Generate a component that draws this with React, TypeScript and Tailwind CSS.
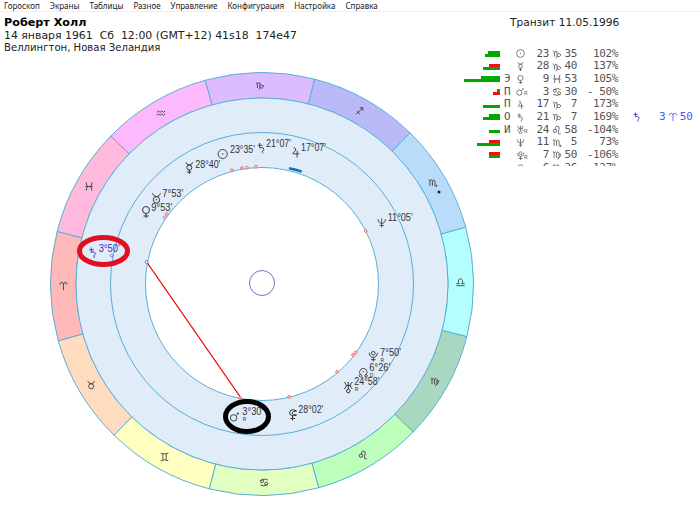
const menu = ["Гороскоп", "Экраны", "Таблицы", "Разное", "Управление", "Конфигурация", "Настройка", "Справка"];

const CX = 262;
const CY = 230;

// astro symbols in a 12x12 box
const shapes: Record<string, { d: string; c?: number[][]; dot?: number[][] }> = {
  sun: { d: "", c: [[6, 6, 5.2]], dot: [[6, 6, 0.8]] },
  mercury: { d: "M2.5 0.3Q3.5 3 6 3Q8.5 3 9.5 0.3M6 8V12M4 10H8", c: [[6, 5.5, 2.5]] },
  venus: { d: "M6 7.5V12M3.5 10H8.5", c: [[6, 4, 3.5]] },
  mars: { d: "M7 5L8.5 3.5", c: [[4.5, 7.5, 3.5]], dot: [[9.3, 2.7, 1]] },
  jupiter: { d: "M3 7Q6.5 5 6 2.5Q5 0.5 3.5 2M2.5 8H10M7.5 4.5V12" },
  saturn: { d: "M2 3H7M4 0.5V6Q6 4.5 8 6Q9.5 8 7 9.5Q6.5 11 8 11.7" },
  uranus: { d: "M2 1Q4 3 4 4.5Q4 6 2 8M10 1Q8 3 8 4.5Q8 6 10 8M4 4.5H8M6 1V8", c: [[6, 10, 1.8]] },
  neptune: { d: "M1.5 2Q2 7 6 7Q10 7 10.5 2M6 1V12M3.5 9.5H8.5" },
  pluto: { d: "M1.5 2.5Q2 7.5 6 7.5Q10 7.5 10.5 2.5M6 7.5V12M3.5 10H8.5", c: [[6, 3, 2]] },
  node: { d: "M3.5 9Q1 7.5 1.5 5Q2.5 1 6 1Q9.5 1 10.5 5Q11 7.5 8.5 9", c: [[2.7, 10, 1.5], [9.3, 10, 1.5]], dot: [[6, 5, 0.8]] },
  selena: { d: "M1.5 0.8Q3 4.5 6 4.5Q9 4.5 10.5 0.8", c: [[6, 8, 3.5]], dot: [[6, 8, 0.8]] },
  lilith: { d: "M9.5 2.5Q6 0 3.5 2Q1.5 4.5 3.5 6.5Q6.5 8 9.5 6.5Q6 6.8 5 4.5Q5.5 2.5 9.5 2.5M5.5 7V12M3.5 10H8" },
  aries: { d: "M6 11V4Q5.5 1 3 1.5Q1 2.5 2.5 4.5M6 4Q6.5 1 9 1.5Q11 2.5 9.5 4.5" },
  taurus: { d: "M2 1Q3 4.5 6 4.5Q9 4.5 10 1", c: [[6, 7.5, 3]] },
  gemini: { d: "M1.5 1.5Q6 3.5 10.5 1.5M1.5 10.5Q6 8.5 10.5 10.5M4 2.5V9.5M8 2.5V9.5" },
  cancer: { d: "M2 3.5Q6 0.5 10.5 3M10 8.5Q6 11.5 1.5 9", c: [[3.5, 4.5, 1.8], [8.5, 7.5, 1.8]] },
  leo: { d: "M5 6Q3 2 6 1.5Q9.5 1.5 8.5 5Q7 9 8 10.5Q9.5 11.5 10.5 10", c: [[3.5, 7, 2]] },
  virgo: { d: "M1 2Q2.5 2 2.5 4V9.5M2.5 3.5Q4.5 1 5.5 3.5V9.5M5.5 3.5Q7.5 1 8.5 3.5V8Q8.5 10.5 6.5 11.5M8.5 5Q11 4 10.5 6.5Q10 8.5 7 10" },
  libra: { d: "M1 10.5H11M1 8H4.5Q3 6.5 3.5 4.5Q4.5 2 6 2Q7.5 2 8.5 4.5Q9 6.5 7.5 8H11" },
  scorpio: { d: "M1 2Q2.5 2 2.5 4V9.5M2.5 3.5Q4.5 1 5.5 3.5V9.5M5.5 3.5Q7.5 1 8.5 3.5V9Q9 10.5 11 9.5L10 8M11 9.5L9.5 10.8" },
  sagittarius: { d: "M2 10L10 2M6.5 2H10V5.5M3 6L6.5 9.5" },
  capricorn: { d: "M1 2Q2.5 2.5 3 5V9M3 4.5Q4.5 1.5 6 3V8.5Q6 10.5 4.5 11M6 6.5Q8 4.5 10 6Q11 8 9 9Q7 9.5 6 8" },
  aquarius: { d: "M1 5L3 3.5L5 5L7 3.5L9 5L11 3.5M1 8.5L3 7L5 8.5L7 7L9 8.5L11 7" },
  pisces: { d: "M2.5 1Q5 6 2.5 11M9.5 1Q7 6 9.5 11M1.5 6H10.5" },
};

const Shape = ({ name, color = "#333", width = 1 }: { name: string; color?: string; width?: number }) => {
  const s = shapes[name];
  return (
    <g fill="none" stroke={color} strokeWidth={width}>
      {s.d && <path d={s.d} />}
      {s.c?.map(([x, y, r]) => <circle key={`${x}-${y}`} cx={x} cy={y} r={r} />)}
      {s.dot?.map(([x, y, r]) => <circle key={`${x}-${y}`} cx={x} cy={y} r={r} fill={color} stroke="none" />)}
    </g>
  );
};

const Placed = ({ name, x, y, size, color }: { name: string; x: number; y: number; size: number; color?: string }) => (
  <g transform={`translate(${x - size / 2} ${y - size / 2}) scale(${size / 12})`}>
    <Shape name={name} color={color} />
  </g>
);

const signs = [
  { glyph: "aries", color: "#ffb9b9", mid: 179.4 },
  { glyph: "taurus", color: "#ffdcc0", mid: 149.4 },
  { glyph: "gemini", color: "#ffffc0", mid: 119.4 },
  { glyph: "cancer", color: "#e0ffc0", mid: 89.4 },
  { glyph: "leo", color: "#bbffbb", mid: 59.4 },
  { glyph: "virgo", color: "#a9d8c0", mid: 29.4 },
  { glyph: "libra", color: "#b3ffff", mid: -0.6 },
  { glyph: "scorpio", color: "#badcfb", mid: -30.6 },
  { glyph: "sagittarius", color: "#babaf9", mid: -60.6 },
  { glyph: "capricorn", color: "#dcbcff", mid: -90.6 },
  { glyph: "aquarius", color: "#fcb9fc", mid: -120.6 },
  { glyph: "pisces", color: "#ffb9dc", mid: -150.6 },
];

// y values below are page coordinates, the svg starts at y=54
const labels = [
  { glyph: "sun", gx: 222.7, gy: 154, size: 10.5, text: "23°35'", x: 230, y: 153 },
  { glyph: "saturn", gx: 261.5, gy: 148, size: 11, text: "21°07'", x: 266, y: 147 },
  { glyph: "jupiter", gx: 295.7, gy: 152, size: 11, text: "17°07'", x: 301, y: 151 },
  { glyph: "mercury", gx: 189.3, gy: 168, size: 12, text: "28°40'", x: 195.3, y: 168 },
  { glyph: "selena", gx: 156.5, gy: 198, size: 11, text: "7°53'", x: 162.3, y: 196.7 },
  { glyph: "venus", gx: 146, gy: 212, size: 12, text: "9°53'", x: 151.3, y: 211 },
  { glyph: "neptune", gx: 381.7, gy: 222.5, size: 10, text: "11°05'", x: 387.7, y: 221 },
  { glyph: "pluto", gx: 373.3, gy: 356, size: 11, text: "7°50'", x: 380, y: 356, sub: "R" },
  { glyph: "node", gx: 363.3, gy: 372.5, size: 10, text: "6°26'", x: 369.3, y: 371, sub: "D" },
  { glyph: "uranus", gx: 348.3, gy: 387, size: 12, text: "24°58'", x: 354.3, y: 385, sub: "R" },
  { glyph: "mars", gx: 235, gy: 416.5, size: 11, text: "3°30'", x: 242.3, y: 415.3, sub: "R" },
  { glyph: "lilith", gx: 293, gy: 414.5, size: 12, text: "28°02'", x: 298.3, y: 413.3 },
];

const aspectDots = [
  [231.7, 170], [242, 168], [247, 167.7], [256, 166.7], [166.7, 214], [164.7, 217.3],
  [365.7, 231], [355.7, 352.3], [353, 355], [337, 372], [289, 397], [240, 398],
];

const rows = [
  { top: ["#00a800", 12], bottom: ["#00a800", 15], mark: "", glyph: "sun", sub: "", deg: "23", sign: "capricorn", min: "35", pct: "102%" },
  { top: ["#f01010", 11], bottom: ["#00a800", 17], mark: "", glyph: "mercury", sub: "", deg: "28", sign: "capricorn", min: "40", pct: "137%" },
  { top: ["#00a800", 19], bottom: ["#00a800", 36], mark: "Э", glyph: "venus", sub: "", deg: "9", sign: "pisces", min: "53", pct: "105%" },
  { top: ["#00a800", 3], bottom: ["#f01010", 7], mark: "П", glyph: "mars", sub: "R", deg: "3", sign: "cancer", min: "30", pct: "- 50%" },
  { top: ["#00a800", 0], bottom: ["#00a800", 17], mark: "П", glyph: "jupiter", sub: "", deg: "17", sign: "capricorn", min: "7", pct: "173%" },
  { top: ["#00a800", 11], bottom: ["#00a800", 17], mark: "О", glyph: "saturn", sub: "", deg: "21", sign: "capricorn", min: "7", pct: "169%" },
  { top: ["#00a800", 0], bottom: ["#00a800", 11], mark: "И", glyph: "uranus", sub: "R", deg: "24", sign: "leo", min: "58", pct: "-104%" },
  { top: ["#f01010", 11], bottom: ["#00a800", 23], mark: "", glyph: "neptune", sub: "", deg: "11", sign: "scorpio", min: "5", pct: "73%" },
  { top: ["#f01010", 11], bottom: ["#00a800", 11], mark: "", glyph: "pluto", sub: "R", deg: "7", sign: "virgo", min: "50", pct: "-106%" },
  { top: ["#00a800", 0], bottom: ["#00a800", 0], mark: "", glyph: "node", sub: "", deg: "6", sign: "virgo", min: "26", pct: "127%" },
];

const polar = (r: number, deg: number) => {
  const a = (deg * Math.PI) / 180;
  return [CX + r * Math.cos(a), CY + r * Math.sin(a)];
};

const sectorPath = (mid: number) => {
  const [ax, ay] = polar(211.5, mid - 15);
  const [bx, by] = polar(211.5, mid + 15);
  const [cx, cy] = polar(186, mid + 15);
  const [dx, dy] = polar(186, mid - 15);
  return `M${ax} ${ay}A211.5 211.5 0 0 1 ${bx} ${by}L${cx} ${cy}A186 186 0 0 0 ${dx} ${dy}Z`;
};

const Wheel = () => (
  <svg width="475" height="452" viewBox="0 0 475 452" className="block overflow-visible">
    {signs.map((s) => {
      const [x, y] = polar(198.5, s.mid);
      return (
        <g key={s.glyph}>
          <path d={sectorPath(s.mid)} fill={s.color} stroke="#5aaed8" strokeWidth="1" />
          <Placed name={s.glyph} x={x} y={y} size={10} />
        </g>
      );
    })}
    <circle cx="439" cy="138" r="1.5" fill="#222" />
    <circle cx={CX} cy={CY} r="186" fill="#e0ecf8" stroke="#5aaed8" />
    <circle cx={CX} cy={CY} r="151.5" fill="#e0ecf8" stroke="#5aaed8" />
    <circle cx={CX} cy={CY} r="116.5" fill="#ffffff" stroke="#5aaed8" />
    <circle cx={CX} cy={CY - 1} r="12.5" fill="none" stroke="#7a70c0" />
    <path d="M289 114.3Q296 115.5 301.7 117.7" fill="none" stroke="#0878b8" strokeWidth="2.5" />
    <line x1="146.7" y1="208" x2="241" y2="344" stroke="#f00000" strokeWidth="1.3" />
    <circle cx="146.7" cy="208" r="1.5" fill="#ffffff" stroke="#5050e0" strokeWidth="0.8" />
    <circle cx="111.7" cy="201.7" r="1.3" fill="#ffffff" stroke="#5050e0" strokeWidth="0.8" />
    {aspectDots.map(([x, y]) => (
      <circle key={`${x}-${y}`} cx={x} cy={y - 54} r="1.4" fill="#ffd0d0" stroke="#f06060" strokeWidth="0.8" />
    ))}
    {labels.map((l) => (
      <g key={l.text} fill="#333">
        <Placed name={l.glyph} x={l.gx} y={l.gy - 54} size={l.size} />
        <text
          x={l.x}
          y={l.y - 54}
          fontSize="11"
          fontFamily="Liberation Sans"
          textLength={l.text.length > 5 ? 25 : 21}
          lengthAdjust="spacingAndGlyphs"
        >
          {l.text}
        </text>
        {l.sub && (
          <text x={l.x + 0.5} y={l.y - 54 + 5.5} fontSize="5" fontFamily="Liberation Sans">
            {l.sub}
          </text>
        )}
      </g>
    ))}
    <Placed name="saturn" x={93} y={198.5} size={11} color="#3333bb" />
    <text x="98.7" y="197.7" fontSize="11" fontFamily="Liberation Sans" fill="#3333bb" textLength={21} lengthAdjust="spacingAndGlyphs">
      3°50'
    </text>
    <ellipse cx="103.5" cy="197" rx="24" ry="13.5" fill="none" stroke="#e01020" strokeWidth="5" />
    <ellipse cx="247" cy="362.5" rx="21.5" ry="15" fill="none" stroke="#000000" strokeWidth="5" />
  </svg>
);

const Icon = ({ name, size, color = "#555" }: { name: string; size: number; color?: string }) => (
  <svg width={size} height={size} viewBox="0 0 12 12" className="block shrink-0">
    <Shape name={name} color={color} />
  </svg>
);

const PositionRow = ({ row, extra }: { row: (typeof rows)[number]; extra?: boolean }) => (
  <div className="flex h-[12.7px] items-center whitespace-nowrap">
    <div className="flex w-[40px] shrink-0 flex-col items-end">
      <div className="h-[3px]" style={{ width: row.top[1] as number, background: row.top[0] as string }} />
      <div className="h-[3px]" style={{ width: row.bottom[1] as number, background: row.bottom[0] as string }} />
    </div>
    <div className="w-[15px] shrink-0 pl-[4px]">{row.mark}</div>
    <div className="relative flex w-[10px] shrink-0 justify-center">
      <Icon name={row.glyph} size={9} />
      {row.sub && <span className="absolute left-[9px] top-[3px] font-['Liberation_Sans'] text-[5px]">{row.sub}</span>}
    </div>
    <div className="w-[24px] shrink-0 text-right tracking-[-0.4px]">{row.deg}</div>
    <div className="flex w-[15px] shrink-0 justify-center">
      <Icon name={row.sign} size={10} />
    </div>
    <div className="w-[13px] shrink-0 text-right tracking-[-0.4px]">{row.min}</div>
    <div className="w-[41px] shrink-0 text-right tracking-[-0.4px]">{row.pct}</div>
    {extra && (
      <div className="ml-[14px] flex items-center text-[#5555ee]">
        <span className="w-[27px]">
          <Icon name="saturn" size={10} color="#3333cc" />
        </span>
        <span>3</span>
        <span className="mx-[2px]">
          <Icon name="aries" size={10} color="#5555ee" />
        </span>
        <span>50</span>
      </div>
    )}
  </div>
);

const App = () => {
  return (
    <div className="h-[506px] w-[700px] overflow-hidden bg-white font-['Liberation_Sans',sans-serif] text-[#222]">
      <nav className="flex h-[12px] items-center gap-[10px] border-b border-[#eeeeee] pl-[4px] font-['Noto_Sans',sans-serif] text-[8px] text-[#222]">
        {menu.map((item) => (
          <span key={item}>{item}</span>
        ))}
      </nav>
      <div className="flex">
        <div className="w-[460px] shrink-0">
          <div className="h-[42px] pl-[4px] pt-[5px] font-['DejaVu_Sans',sans-serif] text-[10.9px] leading-[12.5px] text-[#222]">
            <div className="text-[11.2px] font-bold text-[#000]">Роберт Холл</div>
            <div className="whitespace-pre">14 января 1961  Сб  12:00 (GMT+12) 41s18  174e47</div>
            <div className="text-[10.1px]">Веллингтон, Новая Зеландия</div>
          </div>
          <Wheel />
        </div>
        <div className="flex-1">
          <div className="pl-[50px] pt-[4px] font-['DejaVu_Sans',sans-serif] text-[10.6px] leading-[12.5px]">
            Транзит 11.05.1996
          </div>
          <div className="mt-[19px] h-[118px] overflow-hidden font-['DejaVu_Sans_Mono',monospace] text-[11px] text-[#555]">
            {rows.map((row) => (
              <PositionRow key={row.glyph} row={row} extra={row.glyph === "saturn"} />
            ))}
          </div>
        </div>
      </div>
    </div>
  );
};

export default App;
